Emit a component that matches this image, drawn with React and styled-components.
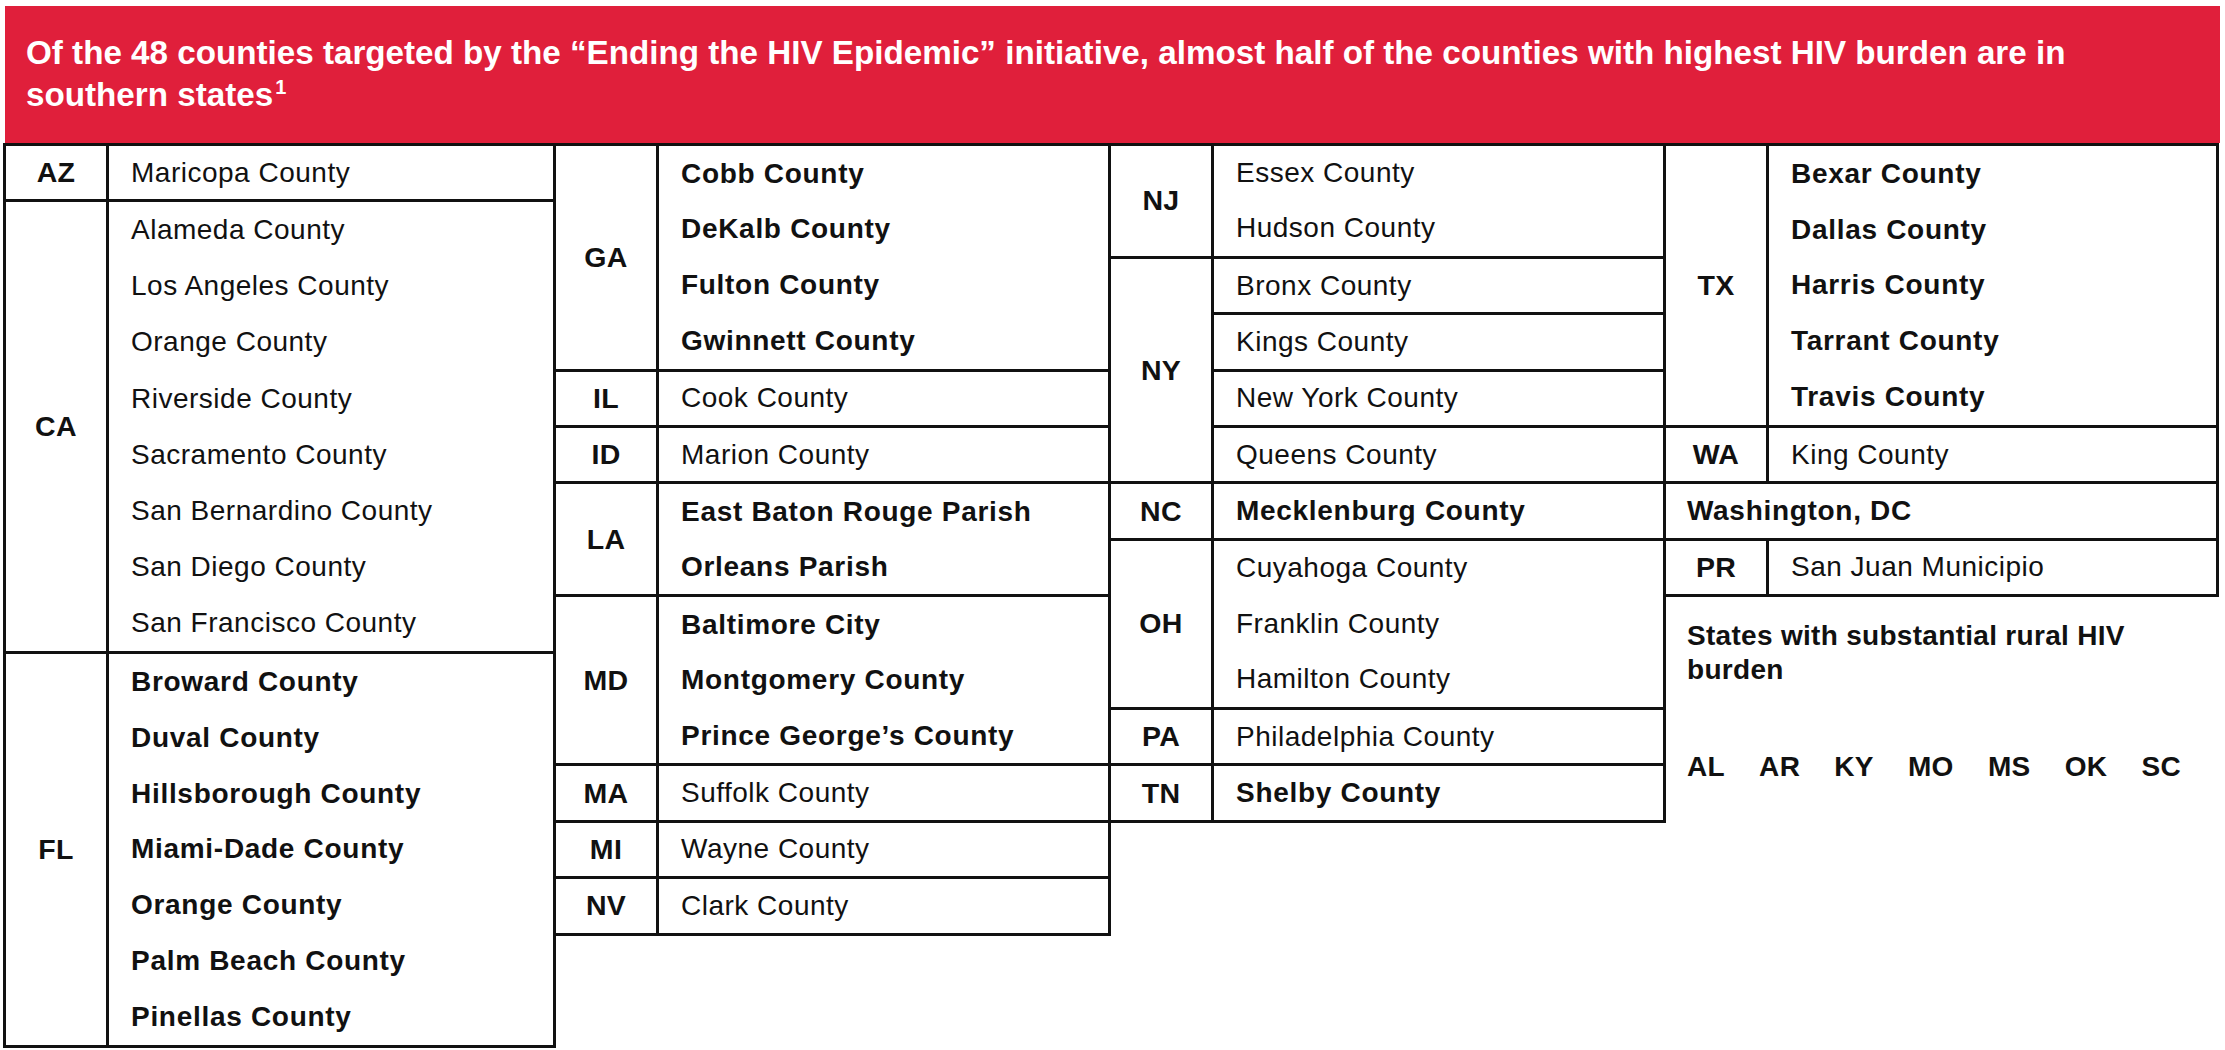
import React from "react";
import styled, { createGlobalStyle } from "styled-components";

const ROW = 56.4;

const columns = [
  [
    { st: "AZ", items: ["Maricopa County"] },
    {
      st: "CA",
      items: [
        "Alameda County",
        "Los Angeles County",
        "Orange County",
        "Riverside County",
        "Sacramento County",
        "San Bernardino County",
        "San Diego County",
        "San Francisco County",
      ],
    },
    {
      st: "FL",
      bold: true,
      items: [
        "Broward County",
        "Duval County",
        "Hillsborough County",
        "Miami-Dade County",
        "Orange County",
        "Palm Beach County",
        "Pinellas County",
      ],
    },
  ],
  [
    {
      st: "GA",
      bold: true,
      items: ["Cobb County", "DeKalb County", "Fulton County", "Gwinnett County"],
    },
    { st: "IL", items: ["Cook County"] },
    { st: "ID", items: ["Marion County"] },
    { st: "LA", bold: true, items: ["East Baton Rouge Parish", "Orleans Parish"] },
    {
      st: "MD",
      bold: true,
      items: ["Baltimore City", "Montgomery County", "Prince George\u2019s County"],
    },
    { st: "MA", items: ["Suffolk County"] },
    { st: "MI", items: ["Wayne County"] },
    { st: "NV", items: ["Clark County"] },
  ],
  [
    { st: "NJ", items: ["Essex County", "Hudson County"] },
    {
      st: "NY",
      split: true,
      items: ["Bronx County", "Kings County", "New York County", "Queens County"],
    },
    { st: "NC", bold: true, items: ["Mecklenburg County"] },
    { st: "OH", items: ["Cuyahoga County", "Franklin County", "Hamilton County"] },
    { st: "PA", items: ["Philadelphia County"] },
    { st: "TN", bold: true, items: ["Shelby County"] },
  ],
  [
    {
      st: "TX",
      bold: true,
      items: [
        "Bexar County",
        "Dallas County",
        "Harris County",
        "Tarrant County",
        "Travis County",
      ],
    },
    { st: "WA", items: ["King County"] },
    { full: "Washington, DC", bold: true },
    { st: "PR", items: ["San Juan Municipio"] },
  ],
];

const rural = ["AL", "AR", "KY", "MO", "MS", "OK", "SC"];

export default function App() {
  return (
    <Page>
      <GlobalStyle />
      <Banner>
        <TitleLine>
          Of the 48 counties targeted by the “Ending the HIV Epidemic” initiative,
          almost half of the counties with highest HIV burden are in
        </TitleLine>
        <TitleLine>
          southern states<Sup>1</Sup>
        </TitleLine>
      </Banner>
      <Table>
        {columns.map((col, ci) => (
          <Column key={ci}>
            <Boxed $first={ci === 0}>
              {col.map((block, bi) =>
                block.full ? (
                  <Block key={bi} $rows={1}>
                    <FullCell $bold={block.bold}>{block.full}</FullCell>
                  </Block>
                ) : (
                  <Block key={bi} $rows={block.items.length}>
                    <StateCell>{block.st}</StateCell>
                    <CountyList>
                      {block.items.map((name, i) => (
                        <County
                          key={name + i}
                          $bold={block.bold}
                          $split={block.split && i < block.items.length - 1}
                        >
                          {name}
                        </County>
                      ))}
                    </CountyList>
                  </Block>
                )
              )}
            </Boxed>
            {ci === 3 && (
              <Rural>
                <RuralTitle>States with substantial rural HIV burden</RuralTitle>
                <RuralList>
                  {rural.map((s) => (
                    <span key={s}>{s}</span>
                  ))}
                </RuralList>
              </Rural>
            )}
          </Column>
        ))}
      </Table>
    </Page>
  );
}

const GlobalStyle = createGlobalStyle`
  html, body {
    margin: 0;
    padding: 0;
    background: #fff;
  }
  body {
    font-family: "Liberation Sans", Arial, sans-serif;
    color: #111;
  }
`;

const Page = styled.div`
  width: 2216px;
  padding: 6px 0 0 3px;
`;

const Banner = styled.div`
  background: #e01f3b;
  color: #fff;
  font-weight: 700;
  font-size: 33.2px;
  height: 137px;
  box-sizing: border-box;
  padding: 26px 100px 0 21px;
  margin-left: 2px;
  margin-right: -1px;
`;

const TitleLine = styled.div`
  line-height: 42px;
  white-space: nowrap;
`;

const Sup = styled.span`
  display: inline-block;
  font-size: 20px;
  line-height: 20px;
  vertical-align: top;
  margin-left: 2px;
  margin-top: 3px;
`;

const Table = styled.div`
  display: grid;
  grid-template-columns: 553px 555px 555px 553px;
  align-items: start;
  border-top: 3px solid #111;
`;

const Column = styled.div`
  display: flex;
  flex-direction: column;
`;

const Boxed = styled.div`
  display: flex;
  flex-direction: column;
  border-right: 3px solid #111;
  border-left: ${(p) => (p.$first ? "3px solid #111" : "none")};
`;

const Block = styled.div`
  display: flex;
  box-sizing: border-box;
  height: ${(p) => p.$rows * ROW}px;
  border-bottom: 3px solid #111;
`;

const StateCell = styled.div`
  width: 100px;
  flex: none;
  display: flex;
  align-items: center;
  justify-content: center;
  font-weight: 700;
  font-size: 28.5px;
  letter-spacing: 0.3px;
  border-right: 3px solid #111;
`;

const CountyList = styled.div`
  flex: 1;
  display: flex;
  flex-direction: column;
`;

const County = styled.div`
  flex: 1;
  display: flex;
  align-items: center;
  padding-left: 22px;
  font-size: 28px;
  letter-spacing: ${(p) => (p.$bold ? "0.7px" : "0.5px")};
  font-weight: ${(p) => (p.$bold ? 700 : 400)};
  border-bottom: ${(p) => (p.$split ? "3px solid #111" : "none")};
`;

const FullCell = styled.div`
  flex: 1;
  display: flex;
  align-items: center;
  padding-left: 21px;
  font-size: 28px;
  letter-spacing: 0.7px;
  font-weight: ${(p) => (p.$bold ? 700 : 400)};
`;

const Rural = styled.div`
  padding: 22px 0 0 21px;
  font-weight: 700;
  font-size: 28px;
  letter-spacing: 0.3px;
`;

const RuralTitle = styled.div`
  line-height: 34px;
  max-width: 470px;
`;

const RuralList = styled.div`
  display: flex;
  justify-content: space-between;
  width: 494px;
  margin-top: 63px;
  line-height: 34px;
`;
